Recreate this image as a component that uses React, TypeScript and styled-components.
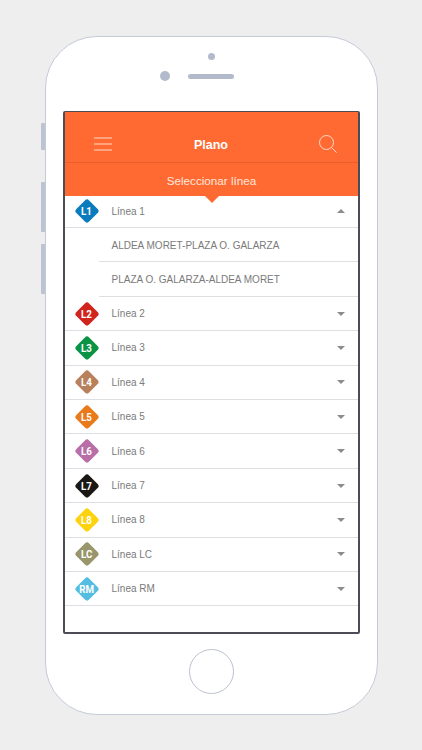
import React from 'react';
import styled, { createGlobalStyle } from 'styled-components';

const lines = [
  { code: 'L1', name: 'Línea 1', color: '#0a7bbd', open: true },
  { code: 'L2', name: 'Línea 2', color: '#d0241c' },
  { code: 'L3', name: 'Línea 3', color: '#0b9345' },
  { code: 'L4', name: 'Línea 4', color: '#b8815c' },
  { code: 'L5', name: 'Línea 5', color: '#e87a1a' },
  { code: 'L6', name: 'Línea 6', color: '#b86ea6' },
  { code: 'L7', name: 'Línea 7', color: '#1a1715' },
  { code: 'L8', name: 'Línea 8', color: '#fdd20e' },
  { code: 'LC', name: 'Línea LC', color: '#98966a' },
  { code: 'RM', name: 'Línea RM', color: '#55bde0' },
];

const routes = ['ALDEA MORET-PLAZA O. GALARZA', 'PLAZA O. GALARZA-ALDEA MORET'];

const App: React.FC = () => {
  return (
    <Page>
      <GlobalStyle />
      <SideButtons>
        <SideButton $height={27} $gap={87} />
        <SideButton $height={50} $gap={32} />
        <SideButton $height={50} $gap={12} />
      </SideButtons>
      <Phone>
        <TopBezel>
          <Camera />
          <SensorRow>
            <Sensor />
            <Speaker />
          </SensorRow>
        </TopBezel>
        <Screen>
          <Header>
            <MenuSlot>
              <svg width="18" height="14" viewBox="0 0 18 14" fill="none" stroke="#ffd9c8" strokeWidth="1">
                <path d="M0 1h18M0 7h18M0 13h18" />
              </svg>
            </MenuSlot>
            <Title>Plano</Title>
            <SearchSlot>
              <svg width="18" height="18" viewBox="0 0 18 18" fill="none" stroke="#ffd9c8" strokeWidth="1">
                <circle cx="7.5" cy="7.5" r="7" />
                <path d="M12.4 12.4L17.6 17.6" />
              </svg>
            </SearchSlot>
          </Header>
          <Selector>Seleccionar línea</Selector>
          <List>
            {lines.map((line) => (
              <React.Fragment key={line.code}>
                <Row>
                  <Badge $color={line.color}>
                    <BadgeText>{line.code}</BadgeText>
                  </Badge>
                  <RowLabel>{line.name}</RowLabel>
                  <Arrow $up={line.open} />
                </Row>
                {line.open &&
                  routes.map((route) => <SubRow key={route}>{route}</SubRow>)}
              </React.Fragment>
            ))}
          </List>
        </Screen>
        <BottomBezel>
          <HomeButton />
        </BottomBezel>
      </Phone>
    </Page>
  );
};

export default App;

const GlobalStyle = createGlobalStyle`
  html, body {
    margin: 0;
    padding: 0;
    background: #eeeeee;
  }
`;

const Page = styled.div`
  display: flex;
  width: 422px;
  height: 750px;
  padding: 36px 0 0 41px;
  box-sizing: border-box;
  overflow: hidden;
  background: #eeeeee;
  font-family: 'Liberation Sans', Arial, sans-serif;
`;

const SideButtons = styled.div`
  display: flex;
  flex-direction: column;
  width: 3.5px;
`;

const SideButton = styled.div<{ $height: number; $gap: number }>`
  width: 3.5px;
  height: ${(p) => p.$height}px;
  margin-top: ${(p) => p.$gap}px;
  background: #bcc4d3;
  border-radius: 1px 0 0 1px;
`;

const Phone = styled.div`
  display: flex;
  flex-direction: column;
  width: 333px;
  height: 679px;
  box-sizing: border-box;
  border: 1.5px solid #c5cad8;
  border-radius: 52px;
  background: #fff;
`;

const TopBezel = styled.div`
  display: flex;
  flex-direction: column;
  align-items: center;
  height: 73.5px;
  padding-top: 16px;
  box-sizing: border-box;
`;

const Camera = styled.div`
  width: 7px;
  height: 7px;
  border-radius: 50%;
  background: #b2bacb;
`;

const SensorRow = styled.div`
  display: grid;
  grid-template-columns: 1fr 46px 1fr;
  align-items: center;
  width: 100%;
  margin-top: 11px;
`;

const Sensor = styled.div`
  justify-self: end;
  width: 10px;
  height: 10px;
  margin-right: 18px;
  border-radius: 50%;
  background: #b2bacb;
`;

const Speaker = styled.div`
  height: 5px;
  border-radius: 3px;
  background: #b2bacb;
`;

const Screen = styled.div`
  display: flex;
  flex-direction: column;
  height: 523.5px;
  margin: 0 16.5px 0 17.5px;
  box-sizing: border-box;
  border: 2px solid #4c4c56;
  border-top-width: 1.5px;
  border-radius: 2px;
  background: #fff;
`;

const Header = styled.div`
  display: grid;
  grid-template-columns: 1fr auto 1fr;
  align-items: center;
  height: 51px;
  padding: 15px 21px 0 29px;
  box-sizing: border-box;
  background: #ff6a33;
  border-bottom: 1px solid #e85f2c;
`;

const MenuSlot = styled.div`
  display: flex;
  justify-self: start;
`;

const SearchSlot = styled.div`
  display: flex;
  justify-self: end;
`;

const Title = styled.div`
  margin: 2px 9px 0 0;
  color: #fff;
  font-size: 12.5px;
  font-weight: 700;
`;

const Selector = styled.div`
  position: relative;
  height: 33.3px;
  line-height: 36px;
  text-align: center;
  color: #ffe6da;
  font-size: 11.7px;
  background: #ff6a33;

  &::after {
    content: '';
    position: absolute;
    left: 50%;
    bottom: -7px;
    margin-left: -7px;
    border-left: 7px solid transparent;
    border-right: 7px solid transparent;
    border-top: 7px solid #ff6a33;
  }
`;

const List = styled.div`
  display: flex;
  flex-direction: column;
`;

const Row = styled.div`
  display: flex;
  align-items: center;
  height: 34.4px;
  padding: 0 13px 0 9.5px;
  box-sizing: border-box;
  border-bottom: 1px solid #dedfe3;
  color: #7a7a7a;
  font-size: 10px;

  &:first-child {
    height: 32.3px;
  }
`;

const Badge = styled.div<{ $color: string }>`
  position: relative;
  display: flex;
  align-items: center;
  justify-content: center;
  width: 24px;
  height: 24px;

  &::before {
    content: '';
    position: absolute;
    left: 3px;
    top: 3px;
    width: 18px;
    height: 18px;
    border-radius: 3px;
    background: ${(p) => p.$color};
    transform: rotate(45deg);
  }
`;

const BadgeText = styled.span`
  position: relative;
  color: #fff;
  font-family: Roboto, 'Liberation Sans', sans-serif;
  font-size: 11.5px;
  font-weight: 700;
  transform: scaleX(0.85);
`;

const RowLabel = styled.span`
  flex: 1;
  margin-left: 13px;
`;

const Arrow = styled.span<{ $up?: boolean }>`
  width: 0;
  height: 0;
  border-left: 4px solid transparent;
  border-right: 4px solid transparent;
  ${(p) => (p.$up ? 'border-bottom: 4.5px solid #8c8c8e;' : 'border-top: 4.5px solid #8c8c8e;')}
`;

const SubRow = styled.div`
  display: flex;
  align-items: center;
  height: 34.4px;
  margin-left: 34px;
  padding: 1px 0 0 12.5px;
  box-sizing: border-box;
  border-bottom: 1px solid #dedfe3;
  color: #7a7a7a;
  font-size: 10px;
`;

const BottomBezel = styled.div`
  display: flex;
  justify-content: center;
  padding-top: 14.5px;
`;

const HomeButton = styled.div`
  width: 45px;
  height: 45px;
  box-sizing: border-box;
  border: 1px solid #bcc2cf;
  border-radius: 50%;
`;
